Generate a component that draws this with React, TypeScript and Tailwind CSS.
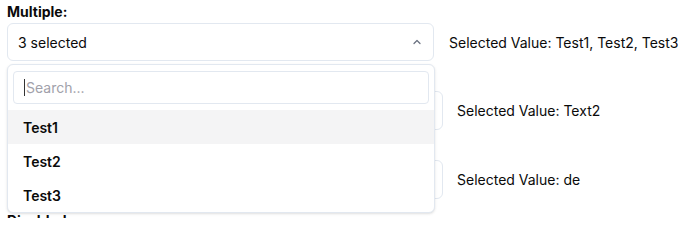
import React from "react";

function ChevronUp() {
  return (
    <svg width="12" height="12" viewBox="0 0 24 24" fill="none" stroke="#6b7280" strokeWidth="2.5" strokeLinecap="round" strokeLinejoin="round">
      <path d="m18 15-6-6-6 6" />
    </svg>
  );
}

export default function App() {
  return (
    <div className="relative px-[7px] font-['Inter',sans-serif] text-[14px] text-[#0a0a0a] bg-white h-[218px] overflow-hidden">
      {/* Block 1 */}
      <div className="h-[23px] leading-[23px] font-bold">Multiple:</div>
      <div className="flex items-center gap-[15px]">
        <div className="w-[427px] h-[38px] border border-[#e2e8f0] rounded-md flex items-center justify-between pl-[10px] pr-[10px]">
          <span>3 selected</span>
          <ChevronUp />
        </div>
        <span>Selected Value: Test1, Test2, Test3</span>
      </div>

      {/* Block 2 */}
      <div className="mt-[8px] h-[22px] leading-[22px] font-bold">Basic:</div>
      <div className="flex items-center gap-[14px]">
        <div className="w-[436px] h-[39px] border border-[#e2e8f0] rounded-md flex items-center pl-[11px]">
          <span>Text2</span>
        </div>
        <span>Selected Value: Text2</span>
      </div>

      {/* Block 3 */}
      <div className="mt-[8px] h-[22px] leading-[22px] font-bold">Editable:</div>
      <div className="flex items-center gap-[14px]">
        <div className="w-[436px] h-[39px] border border-[#e2e8f0] rounded-md flex items-center pl-[11px]">
          <span>de</span>
        </div>
        <span>Selected Value: de</span>
      </div>

      {/* Block 4 */}
      <div className="mt-[11px] h-[22px] leading-[22px] font-bold">Disabled</div>

      {/* Dropdown */}
      <div className="absolute left-[7px] top-[64px] w-[428px] border border-[#e2e8f0] rounded-md bg-white shadow-sm">
        <div className="pt-[6px] px-[5px] pb-[6px]">
          <div className="h-[33px] border border-[#e2e8f0] rounded-[4px] flex items-center pl-[10px]">
            <span className="w-px h-[17px] bg-[#333] mr-px" />
            <span className="text-[#a1a1aa]">Search...</span>
          </div>
        </div>
        <div className="flex flex-col">
          <div className="h-[34px] flex items-center pl-[15px] bg-[#f4f4f5] font-semibold">Test1</div>
          <div className="h-[34px] flex items-center pl-[15px] font-semibold">Test2</div>
          <div className="h-[34px] flex items-center pl-[15px] font-semibold">Test3</div>
        </div>
      </div>
    </div>
  );
}
